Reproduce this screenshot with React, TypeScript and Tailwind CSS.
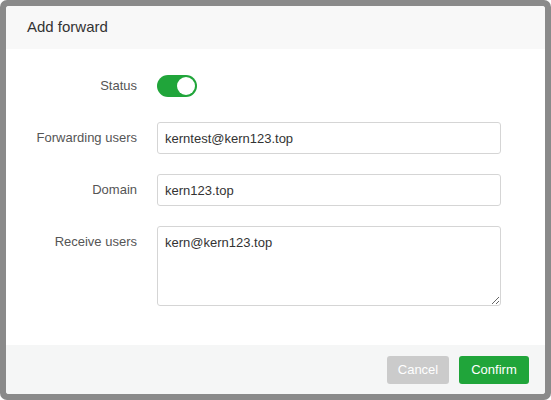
import { useState } from "react";

function Toggle({ on, onChange }: { on: boolean; onChange: (v: boolean) => void }) {
    return (
        <button
            type="button"
            onClick={() => onChange(!on)}
            className={`relative w-[40px] h-[22px] rounded-full ${on ? "bg-[#20a53a]" : "bg-[#cccccc]"}`}
        >
            <span
                className={`absolute top-[2px] w-[18px] h-[18px] rounded-full bg-white ${on ? "left-[20px]" : "left-[2px]"}`}
            />
        </button>
    );
}

function Row({ label, children, top }: { label: string; children: React.ReactNode; top?: boolean }) {
    return (
        <div className={`flex ${top ? "items-start" : "items-center"} gap-[20px]`}>
            <label className="w-[131px] h-[32px] flex items-center justify-end text-[13px] text-[#555555]">
                {label}
            </label>
            {children}
        </div>
    );
}

export default function App() {
    const [status, setStatus] = useState(true);
    const [forwardUser, setForwardUser] = useState("kerntest@kern123.top");
    const [domain, setDomain] = useState("kern123.top");
    const [receive, setReceive] = useState("kern@kern123.top");

    const inputClass =
        "w-[344px] h-[32px] px-[7px] border border-[#d5d5d5] rounded-[3px] text-[13px] text-[#333333] outline-none focus:border-[#20a53a]";

    return (
        <div className="w-[551px] h-[400px] bg-white" style={{ fontFamily: '"Liberation Sans", Arial, sans-serif' }}>
            <div className="w-full h-full bg-[#8a8a8a] rounded-[7px] p-[6px]">
                <div className="h-[388px] flex flex-col bg-white rounded-[3px] overflow-hidden">
                    <div className="h-[43px] shrink-0 flex items-center pl-[21px] bg-[#f8f8f8] text-[15px] text-[#333333]">
                        Add forward
                    </div>

                    <div className="flex-1 flex flex-col gap-[20px] pt-[21px]">
                        <Row label="Status">
                            <Toggle on={status} onChange={setStatus} />
                        </Row>
                        <Row label="Forwarding users">
                            <input
                                type="text"
                                value={forwardUser}
                                onChange={(e) => setForwardUser(e.target.value)}
                                className={inputClass}
                            />
                        </Row>
                        <Row label="Domain">
                            <input
                                type="text"
                                value={domain}
                                onChange={(e) => setDomain(e.target.value)}
                                className={inputClass}
                            />
                        </Row>
                        <Row label="Receive users" top>
                            <textarea
                                value={receive}
                                onChange={(e) => setReceive(e.target.value)}
                                className="w-[344px] h-[80px] px-[7px] py-[6px] border border-[#d5d5d5] rounded-[3px] text-[13px] leading-[20px] text-[#333333] outline-none focus:border-[#20a53a]"
                            />
                        </Row>
                    </div>

                    <div className="h-[49px] shrink-0 flex items-center justify-end gap-[10px] pr-[16px] bg-[#f5f6f6]">
                        <button type="button" className="w-[62px] h-[28px] rounded-[3px] bg-[#cbcbcb] text-white text-[13px]">
                            Cancel
                        </button>
                        <button type="button" className="w-[70px] h-[28px] rounded-[3px] bg-[#20a53a] text-white text-[13px]">
                            Confirm
                        </button>
                    </div>
                </div>
            </div>
        </div>
    );
}
